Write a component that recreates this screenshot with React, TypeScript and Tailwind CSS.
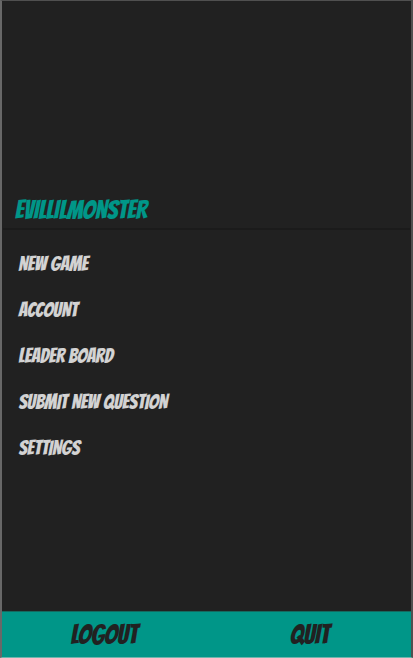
const items = ['NEW GAME', 'ACCOUNT', 'LEADER BOARD', 'SUBMIT NEW QUESTION', 'SETTINGS'];

export default function App() {
  return (
    <div className="flex h-[658px] w-[413px] flex-col border-t border-r-2 border-b border-l-2 border-t-[#505050] border-r-[#505050] border-b-[#70b5ad] border-l-[#686868] bg-[#212121] font-['Bangers','Liberation_Sans_Narrow',sans-serif] font-normal whitespace-nowrap">
      <header className="mx-px flex h-[229px] items-end border-b-2 border-[#1b1b1b] pb-[2px] pl-[12px]">
        <h1 className="text-[25.6px] leading-[32px] text-[#009688] [-webkit-text-stroke:0.15px_#009688]">EVILLILMONSTER</h1>
      </header>
      <nav className="flex flex-1 flex-col items-start pt-[10.6px] pl-[16.5px]">
        {items.map((label) => (
          <button key={label} className="h-[46.2px] text-[20px] leading-[46px] text-[#d3d3d3] [-webkit-text-stroke:0.15px_#d3d3d3]">
            {label}
          </button>
        ))}
      </nav>
      <footer className="grid h-[46px] grid-cols-2 border-t border-[#14695f] bg-[#009688] pt-[2px] text-[26.4px] leading-[43px] text-[#212121] [-webkit-text-stroke:0.15px_#212121]">
        <button>LOGOUT</button>
        <button className="pl-[2px]">QUIT</button>
      </footer>
    </div>
  );
}
